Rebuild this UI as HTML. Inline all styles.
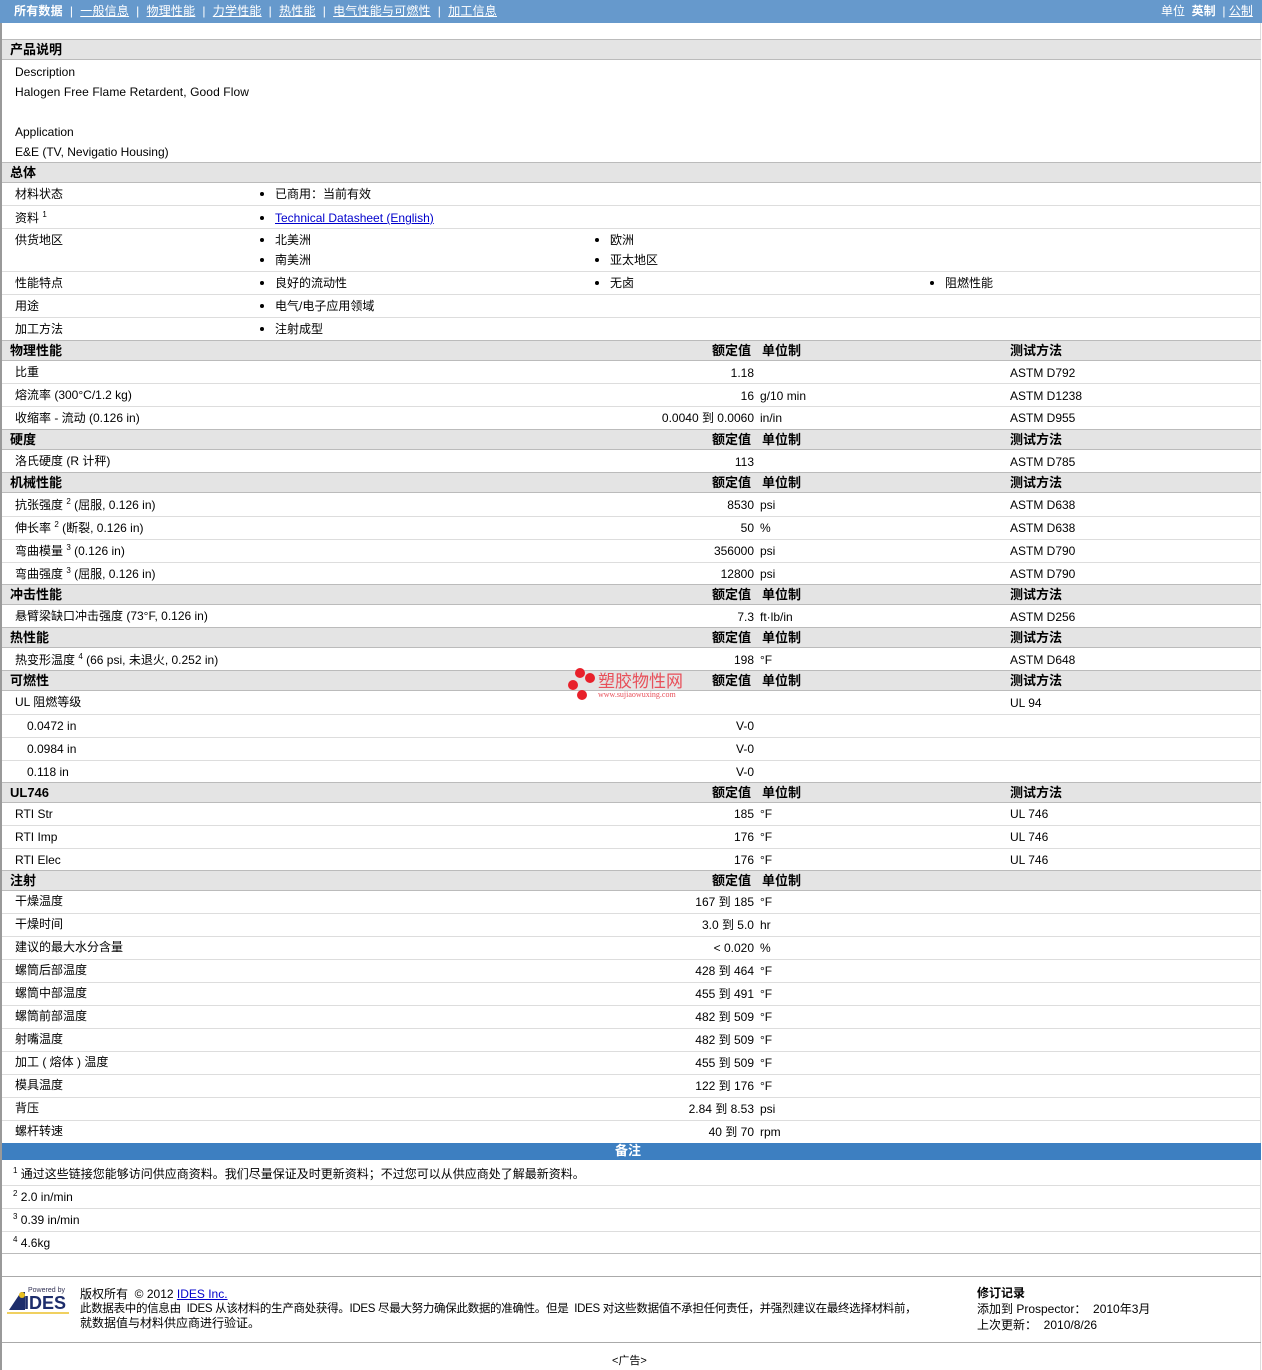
<!DOCTYPE html>
<html><head><meta charset="utf-8"><style>
*{margin:0;padding:0}
body{width:1262px;height:1370px;position:relative;background:#fff;font-family:"Liberation Sans","Noto Sans CJK SC",sans-serif;font-size:12px;color:#000;overflow:hidden}
div{position:absolute;white-space:nowrap}
.t{line-height:14px}
.v{line-height:14px;right:508px;text-align:right}
.u{left:760px;line-height:14px}
.m{left:1010px;line-height:14px}
.band{left:2px;right:1px;background:#e4e4e4;border-top:1px solid #bbb;border-bottom:1px solid #bbb}
.band b{position:absolute;left:8px;top:2px;font-size:13px;line-height:15px}
.band .h1{left:710px}.band .h2{left:760px}.band .h3{left:1008px}
.ln{left:2px;right:1px;height:1px;background:#ddd}
.bul{display:inline-block;width:4px;height:4px;border-radius:2px;background:#000;margin-right:11px;vertical-align:2px}
a{color:#00c}
sup{font-size:8px;line-height:0;position:relative;top:-5px;vertical-align:baseline}
</style></head><body>
<div style="left:0;top:0;width:1262px;height:23px;background:#6699cc"></div>
<div class="t" style="left:14px;top:4px;color:#fff;font-size:12px;letter-spacing:0.2px"><b>所有数据</b> &nbsp;| &nbsp;<u>一般信息</u> &nbsp;| &nbsp;<u>物理性能</u> &nbsp;| &nbsp;<u>力学性能</u> &nbsp;| &nbsp;<u>热性能</u> &nbsp;| &nbsp;<u>电气性能与可燃性</u> &nbsp;| &nbsp;<u>加工信息</u></div>
<div class="t" style="left:1161px;top:4px;color:#fff">单位 &nbsp;<b>英制</b> &nbsp;| <u>公制</u></div>
<div style="left:0;top:23px;width:2px;height:1347px;background:#999"></div>
<div style="left:1260px;top:23px;width:1px;height:1347px;background:#ddd"></div>

<div class="band" style="top:39px;height:19px"><b>产品说明</b></div>
<div class="t" style="left:15px;top:65px">Description</div>
<div class="t" style="left:15px;top:85px;letter-spacing:0.1px">Halogen Free Flame Retardent, Good Flow</div>
<div class="t" style="left:15px;top:125px">Application</div>
<div class="t" style="left:15px;top:145px">E&amp;E (TV, Nevigatio Housing)</div>

<div class="band" style="top:162px;height:19px"><b>总体</b></div>
<div class="t" style="left:15px;top:187px">材料状态</div><div class="t" style="left:260px;top:187px"><span class="bul"></span>已商用：当前有效</div>
<div class="ln" style="top:205px"></div>
<div class="t" style="left:15px;top:211px">资料 <sup>1</sup></div><div class="t" style="left:260px;top:211px"><span class="bul"></span><a><u>Technical Datasheet (English)</u></a></div>
<div class="ln" style="top:228px"></div>
<div class="t" style="left:15px;top:233px">供货地区</div><div class="t" style="left:260px;top:233px"><span class="bul"></span>北美洲</div><div class="t" style="left:595px;top:233px"><span class="bul"></span>欧洲</div>
<div class="t" style="left:260px;top:253px"><span class="bul"></span>南美洲</div><div class="t" style="left:595px;top:253px"><span class="bul"></span>亚太地区</div>
<div class="ln" style="top:271px"></div>
<div class="t" style="left:15px;top:276px">性能特点</div><div class="t" style="left:260px;top:276px"><span class="bul"></span>良好的流动性</div><div class="t" style="left:595px;top:276px"><span class="bul"></span>无卤</div><div class="t" style="left:930px;top:276px"><span class="bul"></span>阻燃性能</div>
<div class="ln" style="top:294px"></div>
<div class="t" style="left:15px;top:299px">用途</div><div class="t" style="left:260px;top:299px"><span class="bul"></span>电气/电子应用领域</div>
<div class="ln" style="top:317px"></div>
<div class="t" style="left:15px;top:322px">加工方法</div><div class="t" style="left:260px;top:322px"><span class="bul"></span>注射成型</div>

<div class="band" style="top:340px;height:19px"><b>物理性能</b><b class="h1">额定值</b><b class="h2">单位制</b><b class="h3">测试方法</b></div>
<div class="t" style="left:15px;top:365px">比重</div><div class="v" style="top:366px">1.18</div><div class="m" style="top:366px">ASTM D792</div>
<div class="ln" style="top:383px"></div>
<div class="t" style="left:15px;top:388px">熔流率 (300°C/1.2 kg)</div><div class="v" style="top:389px">16</div><div class="u" style="top:389px">g/10 min</div><div class="m" style="top:389px">ASTM D1238</div>
<div class="ln" style="top:406px"></div>
<div class="t" style="left:15px;top:411px">收缩率 - 流动 (0.126 in)</div><div class="v" style="top:411px">0.0040 到 0.0060</div><div class="u" style="top:411px">in/in</div><div class="m" style="top:411px">ASTM D955</div>

<div class="band" style="top:429px;height:19px"><b>硬度</b><b class="h1">额定值</b><b class="h2">单位制</b><b class="h3">测试方法</b></div>
<div class="t" style="left:15px;top:454px">洛氏硬度 (R 计秤)</div><div class="v" style="top:455px">113</div><div class="m" style="top:455px">ASTM D785</div>

<div class="band" style="top:472px;height:19px"><b>机械性能</b><b class="h1">额定值</b><b class="h2">单位制</b><b class="h3">测试方法</b></div>
<div class="t" style="left:15px;top:498px">抗张强度 <sup>2</sup> (屈服, 0.126 in)</div><div class="v" style="top:498px">8530</div><div class="u" style="top:498px">psi</div><div class="m" style="top:498px">ASTM D638</div>
<div class="ln" style="top:516px"></div>
<div class="t" style="left:15px;top:521px">伸长率 <sup>2</sup> (断裂, 0.126 in)</div><div class="v" style="top:521px">50</div><div class="u" style="top:521px">%</div><div class="m" style="top:521px">ASTM D638</div>
<div class="ln" style="top:539px"></div>
<div class="t" style="left:15px;top:544px">弯曲模量 <sup>3</sup> (0.126 in)</div><div class="v" style="top:544px">356000</div><div class="u" style="top:544px">psi</div><div class="m" style="top:544px">ASTM D790</div>
<div class="ln" style="top:562px"></div>
<div class="t" style="left:15px;top:567px">弯曲强度 <sup>3</sup> (屈服, 0.126 in)</div><div class="v" style="top:567px">12800</div><div class="u" style="top:567px">psi</div><div class="m" style="top:567px">ASTM D790</div>

<div class="band" style="top:584px;height:19px"><b>冲击性能</b><b class="h1">额定值</b><b class="h2">单位制</b><b class="h3">测试方法</b></div>
<div class="t" style="left:15px;top:609px">悬臂梁缺口冲击强度 (73°F, 0.126 in)</div><div class="v" style="top:610px">7.3</div><div class="u" style="top:610px">ft·lb/in</div><div class="m" style="top:610px">ASTM D256</div>

<div class="band" style="top:627px;height:19px"><b>热性能</b><b class="h1">额定值</b><b class="h2">单位制</b><b class="h3">测试方法</b></div>
<div class="t" style="left:15px;top:653px">热变形温度 <sup>4</sup> (66 psi, 未退火, 0.252 in)</div><div class="v" style="top:653px">198</div><div class="u" style="top:653px">°F</div><div class="m" style="top:653px">ASTM D648</div>

<div class="band" style="top:670px;height:19px"><b>可燃性</b><b class="h1">额定值</b><b class="h2">单位制</b><b class="h3">测试方法</b></div>
<svg style="position:absolute;left:566px;top:667px" width="30" height="34"><circle cx="14" cy="6" r="5" fill="#e8202a"/><circle cx="24" cy="11" r="5" fill="#e8202a"/><circle cx="7" cy="18" r="5" fill="#e8202a"/><circle cx="16" cy="28" r="5" fill="#e8202a"/></svg>
<div class="t" style="left:598px;top:672px;color:#e8505a;font-size:17px;line-height:19px">塑胶物性网</div>
<div class="t" style="left:598px;top:690px;color:#e8505a;font-size:8px;line-height:9px;font-family:'Liberation Serif',serif">www.sujiaowuxing.com</div>
<div class="t" style="left:15px;top:695px">UL 阻燃等级</div><div class="m" style="top:696px">UL 94</div>
<div class="ln" style="top:714px"></div>
<div class="t" style="left:27px;top:719px">0.0472 in</div><div class="v" style="top:719px">V-0</div>
<div class="ln" style="top:737px"></div>
<div class="t" style="left:27px;top:742px">0.0984 in</div><div class="v" style="top:742px">V-0</div>
<div class="ln" style="top:760px"></div>
<div class="t" style="left:27px;top:765px">0.118 in</div><div class="v" style="top:765px">V-0</div>

<div class="band" style="top:782px;height:19px"><b>UL746</b><b class="h1">额定值</b><b class="h2">单位制</b><b class="h3">测试方法</b></div>
<div class="t" style="left:15px;top:807px">RTI Str</div><div class="v" style="top:807px">185</div><div class="u" style="top:807px">°F</div><div class="m" style="top:807px">UL 746</div>
<div class="ln" style="top:825px"></div>
<div class="t" style="left:15px;top:830px">RTI Imp</div><div class="v" style="top:830px">176</div><div class="u" style="top:830px">°F</div><div class="m" style="top:830px">UL 746</div>
<div class="ln" style="top:848px"></div>
<div class="t" style="left:15px;top:853px">RTI Elec</div><div class="v" style="top:853px">176</div><div class="u" style="top:853px">°F</div><div class="m" style="top:853px">UL 746</div>

<div class="band" style="top:870px;height:19px"><b>注射</b><b class="h1">额定值</b><b class="h2">单位制</b></div>
<div class="t" style="left:15px;top:894px">干燥温度</div><div class="v" style="top:895px">167 到 185</div><div class="u" style="top:895px">°F</div>
<div class="ln" style="top:913px"></div>
<div class="t" style="left:15px;top:917px">干燥时间</div><div class="v" style="top:918px">3.0 到 5.0</div><div class="u" style="top:918px">hr</div>
<div class="ln" style="top:936px"></div>
<div class="t" style="left:15px;top:940px">建议的最大水分含量</div><div class="v" style="top:941px">&lt; 0.020</div><div class="u" style="top:941px">%</div>
<div class="ln" style="top:959px"></div>
<div class="t" style="left:15px;top:963px">螺筒后部温度</div><div class="v" style="top:964px">428 到 464</div><div class="u" style="top:964px">°F</div>
<div class="ln" style="top:982px"></div>
<div class="t" style="left:15px;top:986px">螺筒中部温度</div><div class="v" style="top:987px">455 到 491</div><div class="u" style="top:987px">°F</div>
<div class="ln" style="top:1005px"></div>
<div class="t" style="left:15px;top:1009px">螺筒前部温度</div><div class="v" style="top:1010px">482 到 509</div><div class="u" style="top:1010px">°F</div>
<div class="ln" style="top:1028px"></div>
<div class="t" style="left:15px;top:1032px">射嘴温度</div><div class="v" style="top:1033px">482 到 509</div><div class="u" style="top:1033px">°F</div>
<div class="ln" style="top:1051px"></div>
<div class="t" style="left:15px;top:1055px">加工 ( 熔体 ) 温度</div><div class="v" style="top:1056px">455 到 509</div><div class="u" style="top:1056px">°F</div>
<div class="ln" style="top:1074px"></div>
<div class="t" style="left:15px;top:1078px">模具温度</div><div class="v" style="top:1079px">122 到 176</div><div class="u" style="top:1079px">°F</div>
<div class="ln" style="top:1097px"></div>
<div class="t" style="left:15px;top:1101px">背压</div><div class="v" style="top:1102px">2.84 到 8.53</div><div class="u" style="top:1102px">psi</div>
<div class="ln" style="top:1120px"></div>
<div class="t" style="left:15px;top:1124px">螺杆转速</div><div class="v" style="top:1125px">40 到 70</div><div class="u" style="top:1125px">rpm</div>

<div style="left:2px;right:1px;top:1143px;height:17px;background:#3d7fc1"></div>
<div class="t" style="left:615px;top:1144px;color:#fff;font-weight:bold;font-size:13px">备注</div>
<div class="t" style="left:13px;top:1167px"><sup>1</sup> 通过这些链接您能够访问供应商资料。我们尽量保证及时更新资料；不过您可以从供应商处了解最新资料。</div>
<div class="ln" style="top:1185px"></div>
<div class="t" style="left:13px;top:1190px"><sup>2</sup> 2.0 in/min</div>
<div class="ln" style="top:1208px"></div>
<div class="t" style="left:13px;top:1213px"><sup>3</sup> 0.39 in/min</div>
<div class="ln" style="top:1231px"></div>
<div class="t" style="left:13px;top:1236px"><sup>4</sup> 4.6kg</div>
<div class="ln" style="top:1253px;background:#bbb"></div>

<div style="left:2px;right:1px;top:1276px;height:1px;background:#aaa"></div>
<div class="t" style="left:28px;top:1287px;font-size:7px;line-height:8px;color:#335">Powered by</div>
<svg style="position:absolute;left:7px;top:1290px" width="20" height="22"><polygon points="2,20 14,2 18,2 18,20" fill="#1d2d6b"/><circle cx="15" cy="5" r="3" fill="#e8c020"/></svg>
<div class="t" style="left:24px;top:1294px;font-size:18px;line-height:18px;font-weight:bold;color:#1d2d6b">IDES</div>
<div style="left:7px;top:1312px;width:62px;height:2px;background:#f0d060"></div>
<div class="t" style="left:80px;top:1287px">版权所有 &nbsp;© 2012 <a><u>IDES Inc.</u></a></div>
<div class="t" style="left:80px;top:1302px;font-size:11.5px;letter-spacing:-0.3px">此数据表中的信息由 &nbsp;IDES 从该材料的生产商处获得。IDES 尽最大努力确保此数据的准确性。但是 &nbsp;IDES 对这些数据值不承担任何责任，并强烈建议在最终选择材料前，</div>
<div class="t" style="left:80px;top:1316px">就数据值与材料供应商进行验证。</div>
<div class="t" style="left:977px;top:1286px;font-weight:bold">修订记录</div>
<div class="t" style="left:977px;top:1302px">添加到 Prospector： &nbsp;2010年3月</div>
<div class="t" style="left:977px;top:1318px">上次更新： &nbsp;2010/8/26</div>
<div style="left:2px;right:1px;top:1342px;height:1px;background:#aaa"></div>
<div class="t" style="left:612px;top:1354px;font-size:11px">&lt;广告&gt;</div>
</body></html>
